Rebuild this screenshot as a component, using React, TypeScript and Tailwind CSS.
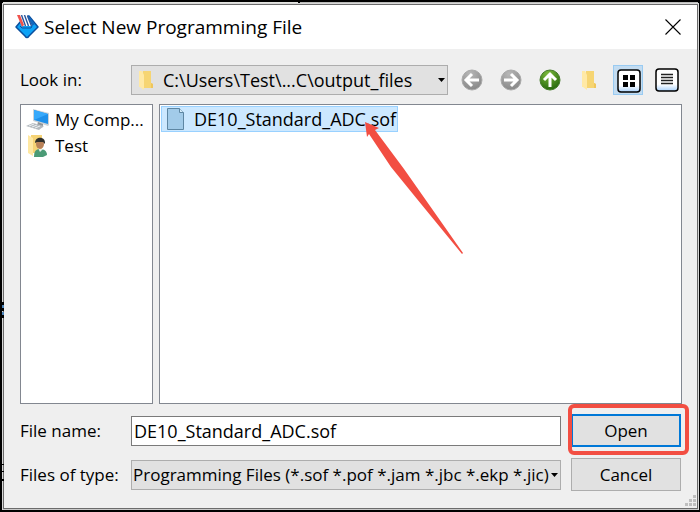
import React from 'react';

const FolderIcon: React.FC = () => (
  <svg width="14" height="20" viewBox="0 0 14 20" aria-hidden="true">
    <path d="M4 1h8v12l2 1v4H3z" fill="#f6d573" />
    <path d="M12 13l2 1v4h-2z" fill="#efc65d" />
    <path d="M0 1h3l2 4v15l-4-3H0z" fill="#ffe9a6" />
  </svg>
);

const FileIcon: React.FC = () => (
  <svg width="18" height="22" viewBox="0 0 18 22" aria-hidden="true">
    <path d="M.5.5h12l4 4v17H.5z" fill="#a2cbe9" stroke="#5d86a3" />
    <path d="M12.500.5v4h4" fill="#d4ebfa" stroke="#5d86a3" />
  </svg>
);

const ComputerIcon: React.FC = () => (
  <svg width="24" height="22" viewBox="0 0 24 22" aria-hidden="true">
    <path d="M7 0l16 4v12l-1 1L7 12z" fill="#cdd2d6" />
    <path d="M8 1l14 4v10L8 11z" fill="#1e90ea" />
    <path d="M8 1l14 4-14 6z" fill="#36a9fb" />
    <path d="M12 13l5 2v3l-3 1-3-2z" fill="#8f959a" />
    <path d="M0 17l7-3 11 3-5 4z" fill="#b4babf" />
    <path d="M3 17l5-2M6 18l5-2M9 19l5-2" stroke="#eef1f3" />
  </svg>
);

const UserFolderIcon: React.FC = () => (
  <svg width="20" height="22" viewBox="0 0 20 22" aria-hidden="true">
    <path d="M3 0h11v18H3z" fill="#f6d375" />
    <path d="M0 0l5 3v18l-5-3z" fill="#ffe8a2" />
    <path d="M6 22c0-6 2-8 6-8s7 2 7 6l-4 2z" fill="#4b9b76" />
    <path d="M10 13l2 4 3-3z" fill="#e9eee8" />
    <ellipse cx="12" cy="9" rx="4" ry="5" fill="#b98258" />
    <path d="M7 8c0-7 11-7 10 1l-2-2H9z" fill="#30302c" />
  </svg>
);

const LogoIcon: React.FC = () => (
  <svg width="24" height="24" viewBox="0 0 24 24" aria-hidden="true">
    <path d="M6 6l5-5h3l9 11-9 9q-2 3-4 0l-9-9z" fill="#0da2f5" stroke="#0b4f9e" strokeWidth="1.500" strokeLinejoin="round" />
    <path d="M12 1h2l6 8-3 2z" fill="#1267bd" />
    <path d="M2 0h10l5 11H7z" fill="#fff" />
    <path d="M2 0h3l4 10-2 2z" fill="#f0524c" />
    <path d="M6.500 0l4 11M9.500 0l4 11M12.500 1l4 10" stroke="#27559c" strokeWidth="1.400" />
    <path d="M5 11l2 2h9l1-2" fill="none" stroke="#0b4f9e" />
  </svg>
);

const RoundArrow: React.FC<{ turn: number; green?: boolean }> = ({ turn, green }) => (
  <svg width="22" height="22" viewBox="0 0 22 22" aria-hidden="true">
    <defs>
      <radialGradient id={`ball${turn}`} cx="40%" cy="20%" r="80%">
        <stop offset="0" stopColor={green ? '#7dbb3c' : '#b8b8b8'} />
        <stop offset="1" stopColor={green ? '#27690d' : '#888'} />
      </radialGradient>
    </defs>
    <circle cx="11" cy="11" r="10" fill={`url(#ball${turn})`} stroke={green ? '#477d2d' : '#aaa'} />
    <path
      d="M18 11H6M11 5l-6 6 6 6"
      transform={`rotate(${turn} 11 11)`}
      fill="none"
      stroke="#fff"
      strokeWidth="3"
    />
  </svg>
);

const ViewIcon: React.FC<{ list?: boolean }> = ({ list }) => (
  <svg width="24" height="24" viewBox="0 0 24 24" aria-hidden="true">
    <defs>
      <linearGradient id="face" x1="0" y1="0" x2="0" y2="1">
        <stop offset="0.700" stopColor="#fff" />
        <stop offset="1" stopColor="#a9d1fa" />
      </linearGradient>
    </defs>
    <rect x="1" y="1" width="22" height="22" rx="3" fill="url(#face)" stroke="#000" strokeWidth="1.500" />
    {list ? (
      <path d="M6 6.500h12M6 9.500h12M6 12.500h12M6 15.500h12" stroke="#222" strokeWidth="1.500" />
    ) : (
      <path d="M6 6h5v5H6zM13 6h5v5h-5zM6 13h5v5H6zM13 13h5v5h-5z" fill="#000" />
    )}
  </svg>
);

const DownArrow: React.FC = () => (
  <svg className="pointer-events-none absolute right-[3px] top-1/2 -translate-y-1/2" width="7" height="4" viewBox="0 0 7 4" aria-hidden="true">
    <path d="M0 0h7L3.500 4z" fill="#000" />
  </svg>
);

const App: React.FC = () => {
  return (
    <div className="relative flex min-h-screen flex-col bg-black pt-[2px] pr-[2px] pb-[2px] pl-[3px] font-['Open_Sans','Noto_Sans',sans-serif] text-[17px] leading-6 text-black">
      <div className="flex h-[2px] gap-[2px]">
        <div className="w-[295px] bg-[#e4e4e0]" />
        <div className="flex-1 bg-[#bdbdbb]" />
      </div>
      <main className="flex flex-1 flex-col border border-[#6b6b6b] bg-[#efefef] outline outline-[#d8d8d8]">
        <header className="flex h-[44px] items-center bg-white pl-[11px] pr-3">
          <LogoIcon />
          <h1 className="ml-[5px] flex-1 text-[19px]">Select New Programming File</h1>
          <button type="button" aria-label="Close" className="flex size-6 items-center justify-center">
            <svg width="16" height="16" viewBox="0 0 16 16" aria-hidden="true">
              <path d="M.5.5l15 15M15.500.5l-15 15" stroke="#000" strokeWidth="1.100" />
            </svg>
          </button>
        </header>

        <div className="flex flex-1 flex-col pt-4 pr-[15px] pb-[17px] pl-4">
          <div className="flex items-center">
            <label htmlFor="look-in" className="w-[111px]">Look in:</label>
            <div className="relative flex-1">
              <span className="pointer-events-none absolute left-2 top-[5px]">
                <FolderIcon />
              </span>
              <select id="look-in" className="block h-[30px] w-full appearance-none border border-[#adadad] bg-[#e1e1e1] pl-[31px] text-[18px] leading-6">
                <option>C:\Users\Test\...C\output_files</option>
              </select>
              <DownArrow />
            </div>
            <div className="ml-[9px] flex gap-[9px]">
              <button type="button" aria-label="Back" className="flex size-[30px] items-center justify-center">
                <RoundArrow turn={0} />
              </button>
              <button type="button" aria-label="Forward" className="flex size-[30px] items-center justify-center">
                <RoundArrow turn={180} />
              </button>
              <button type="button" aria-label="Parent directory" className="flex size-[30px] items-center justify-center">
                <RoundArrow turn={90} green />
              </button>
              <button type="button" aria-label="New folder" className="flex size-[30px] items-center justify-center">
                <FolderIcon />
              </button>
              <button type="button" aria-label="List view" className="flex size-[30px] items-center justify-center border border-[#99cbf2] bg-[#c3dcf1] pt-[2px] pl-[2px]">
                <ViewIcon />
              </button>
              <button type="button" aria-label="Detail view" className="flex size-[30px] items-center justify-center">
                <ViewIcon list />
              </button>
            </div>
          </div>

          <div className="mt-[9px] flex flex-1 gap-[6px]">
            <ul className="w-[133px] border border-[#828790] bg-white pt-[2px] pl-[5px]">
              <li className="flex h-[26px] items-center gap-[5px]">
                <ComputerIcon />
                My Comp...
              </li>
              <li className="flex h-[26px] items-center gap-[5px]">
                <span className="flex w-6 justify-center">
                  <UserFolderIcon />
                </span>
                Test
              </li>
            </ul>
            <ul className="flex-1 border border-[#828790] bg-white p-px">
              <li className="relative flex h-[26px] w-[237px] items-center gap-[9px] border border-[#99d1ff] bg-[#cce8ff] pl-[5px] text-[18px]">
                <FileIcon />
                DE10_Standard_ADC.sof
                <svg className="absolute left-[202px] top-[14px]" width="100" height="135" viewBox="0 0 100 135" aria-hidden="true">
                  <path d="M1 1L15 7L11 9L40 48L99 132L98 133L53 78L27 46L5 13L3 16z" fill="#f24e42" />
                </svg>
              </li>
            </ul>
          </div>

          <div className="mt-[10px] flex items-center pr-px">
            <label htmlFor="file-name" className="w-[111px]">File name:</label>
            <input id="file-name" type="text" defaultValue="DE10_Standard_ADC.sof" className="h-[30px] min-w-0 flex-1 border border-[#7a7a7a] bg-white px-[2px] text-[18px]" />
            <div className="relative ml-[10px]">
              <button type="button" className="block h-[33px] w-[110px] border-2 border-[#0078d7] bg-[#e1e1e1]">Open</button>
              <div className="pointer-events-none absolute -top-[10px] -right-2 -bottom-2 -left-[3px] rounded-md border-4 border-[#f24e42]" />
            </div>
          </div>

          <div className="mt-[11px] flex items-center pr-px">
            <label htmlFor="file-type" className="w-[111px]">Files of type:</label>
            <div className="relative flex-1">
              <select id="file-type" className="block h-[30px] w-full appearance-none border border-[#adadad] bg-[#e1e1e1] pl-px leading-6">
                <option>Programming Files (*.sof *.pof *.jam *.jbc *.ekp *.jic)</option>
              </select>
              <DownArrow />
            </div>
            <button type="button" className="ml-[10px] h-[33px] w-[110px] border border-[#adadad] bg-[#e1e1e1]">Cancel</button>
          </div>
        </div>
      </main>
      <div className="h-px bg-[#c9c9c9]" />

      {/* bits of the window behind, showing along the left edge */}
      <svg className="absolute bottom-[30px] left-0" width="4" height="180" viewBox="0 0 4 180" aria-hidden="true">
        <path d="M2 0h2v3H2zM2 6h2v3H2zM2 13h2v3H2zM2 162h2v1H2zM2 169h2v1H2zM2 177h2v2H2z" fill="#000" />
        <path d="M2 3h2v3H2zM2 10h2v3H2z" fill="#4b83b8" />
      </svg>

      <svg className="absolute right-[4px] bottom-[6px]" width="11" height="11" viewBox="0 0 11 11" aria-hidden="true">
        <path d="M8 0h3v3H8zM4 4h3v3H4zM8 4h3v3H8zM0 8h3v3H0zM4 8h3v3H4zM8 8h3v3H8z" fill="#bfbfbf" />
      </svg>
    </div>
  );
};

export default App;
